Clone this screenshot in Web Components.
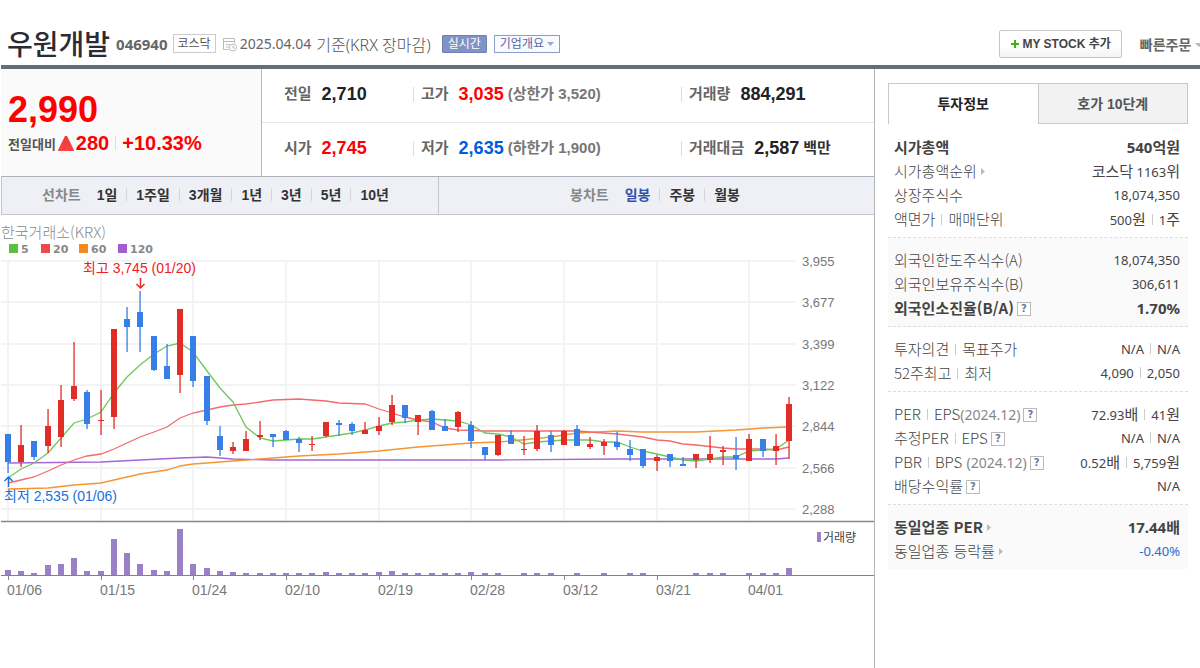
<!DOCTYPE html>
<html lang="ko">
  <head>
    <meta charset="UTF-8" />
    <title>우원개발</title>
    <style>
      body {
        margin: 0;
        background: #fff;
        color: #444;
        font-family: "Noto Sans", "Noto Sans CJK KR", sans-serif;
        font-size: 14px;
      }
    </style>
  </head>
  <body>
    <stock-page>
      <stock-header slot="header" name="우원개발" code="046940"></stock-header>
      <price-summary></price-summary>
      <chart-toolbar></chart-toolbar>
      <candle-chart></candle-chart>
      <info-panel slot="side"></info-panel>
    </stock-page>

    <template id="stock-page">
      <style>
        :host {
          display: flex;
          flex-direction: column;
          min-height: 100vh;
          overflow: hidden;
        }
        .body {
          display: flex;
          flex: 1;
          margin-left: 1px;
          border-top: 4px solid #646d79;
        }
        main {
          flex: 1;
          min-width: 0;
          border-right: 1px solid #b4b5bb;
        }
        aside {
          flex: 0 0 300px;
          padding: 14px 12px 0 13px;
        }
      </style>
      <slot name="header"></slot>
      <div class="body">
        <main><slot></slot></main>
        <aside><slot name="side"></slot></aside>
      </div>
    </template>

    <template id="stock-header">
      <style>
        :host {
          display: flex;
          align-items: center;
          height: 43px;
          padding: 22px 0 0 7px;
          white-space: nowrap;
        }
        h1 {
          margin: 0 6px 0 0;
          font-size: 28px;
          line-height: 40px;
          font-weight: 500;
          color: #2b2b33;
        }
        .code {
          margin-right: 5px;
          font-size: 15px;
          font-weight: bold;
          color: #666;
        }
        .market {
          margin-right: 6px;
          padding: 0 4px;
          border: 1px solid #ccc;
          font-size: 12px;
          line-height: 17px;
          color: #555;
        }
        .date {
          margin: 0 5px 0 2px;
          color: #666;
        }
        .base {
          font-size: 16px;
          font-weight: 300;
          color: #555;
        }
        button {
          box-sizing: border-box;
          font-family: inherit;
          font-size: 12px;
          line-height: 16px;
          cursor: pointer;
        }
        .live {
          margin: 0 7px 0 11px;
          padding: 0 5px;
          border: 1px solid #6f80b4;
          border-radius: 1px;
          background: #8193c5;
          color: #fff;
        }
        .outline {
          padding: 0 5px;
          border: 1px solid #8c9ccb;
          background: #f9faff;
          color: #5667a8;
        }
        .outline svg {
          vertical-align: 2px;
        }
        .right {
          display: flex;
          align-items: center;
          gap: 18px;
          margin-left: auto;
          font-weight: bold;
          color: #444;
        }
        .my {
          display: flex;
          align-items: center;
          gap: 3px;
          height: 28px;
          padding: 0 10px;
          border: 1px solid #c6c6c6;
          border-radius: 2px;
          background: linear-gradient(#fff 60%, #f3f3f3);
          font-family: "Liberation Sans", "Noto Sans CJK KR", sans-serif;
          font-weight: bold;
          color: #444;
        }
        a {
          font-size: 14px;
          color: #666;
          text-decoration: none;
        }
        a svg {
          margin: 0 -3px 3px 0;
        }
      </style>
      <h1></h1>
      <span class="code"></span>
      <span class="market">코스닥</span>
      <svg width="16" height="16" viewBox="0 0 16 16" fill="none" stroke="#bbb">
        <path d="M7 13.500H1.500V2.500H12.500V7M1.500 5.500H12.500M4 8.500H8M4 11H7" />
        <circle cx="11" cy="11.500" r="3.500" fill="#fff" />
        <path d="M11 9.500V12H13" />
      </svg>
      <span class="date">2025.04.04</span>
      <span class="base">기준(KRX 장마감)</span>
      <button class="live">실시간</button>
      <button class="outline">
        기업개요
        <svg width="7" height="4" viewBox="0 0 7 4"><path d="M0 0H7L3.500 4Z" fill="#9ba9d4" /></svg>
      </button>
      <div class="right">
        <button class="my">
          <svg width="10" height="10" viewBox="0 0 10 10"><path d="M4 1H6V4H9V6H6V9H4V6H1V4H4Z" fill="#3cb10f" /></svg>
          MY STOCK 추가
        </button>
        <a href="#order">빠른주문
          <svg width="8" height="4" viewBox="0 0 8 4"><path d="M0 0H8L4 4Z" fill="#bbb" /></svg>
        </a>
      </div>
    </template>

    <template id="price-summary">
      <style>
        :host {
          display: flex;
          height: 107px;
          font-family: "Liberation Sans", "Noto Sans CJK KR", sans-serif;
          font-weight: bold;
          white-space: nowrap;
        }
        .today {
          box-sizing: border-box;
          flex: 0 0 30%;
          max-width: 261px;
          padding: 20px 0 0 7px;
          border-right: 1px solid #b8b8bc;
          background: #fafafa;
          color: #f00;
        }
        .price {
          font-size: 36px;
          line-height: 42px;
        }
        .diff {
          display: flex;
          align-items: center;
          height: 24px;
          font-size: 20px;
        }
        .diff span {
          font-size: 13px;
          color: #555;
        }
        .diff svg {
          margin: 0 2px;
        }
        .diff b + b {
          margin-left: 6px;
          padding-left: 7px;
          background: linear-gradient(#ddd, #ddd) left / 1px 14px no-repeat;
        }
        table {
          flex: 1;
          table-layout: fixed;
          border-collapse: collapse;
          font-size: 18px;
          line-height: 20px;
          color: #222;
        }
        tr + tr td {
          border-top: 1px solid #e6e6e8;
        }
        td {
          padding: 0 0 3px;
        }
        td:nth-child(1) {
          width: 151px;
        }
        td:nth-child(2) {
          width: 268px;
        }
        .cell {
          display: flex;
          align-items: center;
          gap: 10px;
          padding-left: 8px;
          background: linear-gradient(#ddd, #ddd) left / 1px 15px no-repeat;
        }
        td:first-child .cell {
          padding-left: 22px;
          background: none;
        }
        .cell span {
          font-size: 15px;
          color: #666;
        }
        .cell i {
          margin-left: -6px;
          font-style: normal;
          font-size: 15px;
          color: #777;
        }
        .cell .unit {
          margin-left: -6px;
          color: #333;
        }
        .up {
          color: #f00;
        }
        .down {
          color: #005dde;
        }
      </style>
      <div class="today">
        <div class="price">2,990</div>
        <div class="diff">
          <span>전일대비</span>
          <svg width="16" height="15" viewBox="0 0 16 15">
            <linearGradient id="g" x2="0" y2="1"><stop stop-color="#e63b3b" /><stop offset="1" stop-color="#f44" /></linearGradient>
            <path d="M7 0H9L16 14V15H0V14Z" fill="url(#g)" />
          </svg>
          <b>280</b><b>+10.33%</b>
        </div>
      </div>
      <table>
        <tr>
          <td><div class="cell"><span>전일</span><b>2,710</b></div></td>
          <td><div class="cell"><span>고가</span><b class="up">3,035</b><i>(상한가 3,520)</i></div></td>
          <td><div class="cell"><span>거래량</span><b>884,291</b></div></td>
        </tr>
        <tr>
          <td><div class="cell"><span>시가</span><b class="up">2,745</b></div></td>
          <td><div class="cell"><span>저가</span><b class="down">2,635</b><i>(하한가 1,900)</i></div></td>
          <td><div class="cell"><span>거래대금</span><b>2,587</b><span class="unit">백만</span></div></td>
        </tr>
      </table>
    </template>

    <template id="chart-toolbar">
      <style>
        :host {
          display: flex;
          height: 37px;
          border: 1px solid #c3c4cc;
          border-top-color: #aeb0bb;
          border-right: 0;
          background: #eff0f6;
          font-family: "Liberation Sans", "Noto Sans CJK KR", sans-serif;
          font-weight: bold;
          white-space: nowrap;
        }
        nav {
          box-sizing: border-box;
          flex: 0 0 50%;
          display: flex;
          align-items: center;
          padding: 0 0 3px 40px;
        }
        nav + nav {
          padding-left: 131px;
          border-left: 1px solid #c3c4cc;
        }
        span {
          margin-right: 7px;
          color: #888;
        }
        a {
          padding: 0 9px;
          color: #333;
          text-decoration: none;
        }
        a + a {
          padding-left: 10px;
          background: linear-gradient(#d5d6dc, #d5d6dc) left / 1px 13px no-repeat;
        }
        .on {
          color: #3450a8;
        }
      </style>
      <nav>
        <span>선차트</span><a href="#d1">1일</a><a href="#w1">1주일</a><a href="#m3">3개월</a><a href="#y1">1년</a><a href="#y3">3년</a><a href="#y5">5년</a><a href="#y10">10년</a>
      </nav>
      <nav>
        <span>봉차트</span><a href="#day" class="on">일봉</a><a href="#week">주봉</a><a href="#month">월봉</a>
      </nav>
    </template>

    <template id="info-panel">
      <style>
        :host {
          display: block;
        }
        .tabs {
          display: flex;
        }
        button {
          flex: 1;
          height: 41px;
          padding: 0 0 2px;
          border: 1px solid #c8c8c8;
          background: #f2f2f2;
          font: bold 14px "Liberation Sans", "Noto Sans CJK KR", sans-serif;
          color: #555;
        }
        button[aria-selected="true"] {
          border-width: 1px 0 0 1px;
          background: #fff;
          color: #222;
        }
      </style>
      <div class="tabs" role="tablist">
        <button role="tab" aria-selected="true">투자정보</button>
        <button role="tab" aria-selected="false">호가 10단계</button>
      </div>
      <div class="groups"></div>
    </template>

    <template id="info-group">
      <style>
        :host {
          display: block;
          padding: 10px 8px 6px 6px;
          border-bottom: 1px dashed #ddd;
        }
        :host([shaded]) {
          background: #fafafa;
        }
        :host(:first-child) {
          padding-top: 11px;
        }
        :host(:last-child) {
          border-bottom: 0;
        }
        table {
          width: 100%;
          border-collapse: collapse;
          white-space: nowrap;
        }
        th,
        td {
          height: 24px;
          padding: 0;
          font-weight: normal;
          line-height: 20px;
        }
        th {
          text-align: left;
          font-size: 15px;
          font-weight: 300;
          font-family: "Noto Sans CJK KR", sans-serif;
        }
        td {
          text-align: right;
          font-size: 13px;
        }
        .strong th,
        .strong td {
          font-weight: bold;
        }
        .strong th,
        .strong td,
        .strong u {
          font-size: 15px;
        }
        u {
          font-size: 15px;
          text-decoration: none;
        }
        i {
          display: inline-block;
          width: 1px;
          height: 11px;
          margin: 0 6px;
          background: #ccc;
        }
        em {
          font: 14px "Noto Sans", sans-serif;
          color: #888;
        }
        th button {
          box-sizing: border-box;
          width: 14px;
          height: 14px;
          margin-left: 3px;
          padding: 0;
          border: 1px solid #bbb;
          background: #fff;
          font: bold 10px/12px "DejaVu Sans", sans-serif;
          color: #6a7a95;
          vertical-align: 2px;
        }
        svg {
          margin-left: 4px;
          vertical-align: 2px;
        }
        .minus {
          color: #2a6ad0;
        }
      </style>
      <table></table>
    </template>

    <script>
      class BaseElement extends HTMLElement {
        constructor() {
          super();
          this.attachShadow({ mode: "open" });
          const tpl = document.getElementById(this.localName);
          if (tpl) this.shadowRoot.append(tpl.content.cloneNode(true));
        }
      }

      class StockHeader extends BaseElement {
        connectedCallback() {
          this.shadowRoot.querySelector("h1").textContent = this.getAttribute("name");
          this.shadowRoot.querySelector(".code").textContent = this.getAttribute("code");
        }
      }

      const help = `<button aria-label="도움말">?</button>`;
      const arrow = `<svg width="4" height="7" viewBox="0 0 4 7"><path d="M0 0L4 3.500L0 7Z" fill="#bbb"/></svg>`;
      const bar = "<i></i>";

      // [label, value, row class]
      const groups = [
        [
          ["시가총액", "540<u>억원</u>", "strong"],
          ["시가총액순위" + arrow, "<u>코스닥</u> 1163<u>위</u>"],
          ["상장주식수", "18,074,350"],
          ["액면가" + bar + "매매단위", "500<u>원</u>" + bar + "1<u>주</u>"],
        ],
        [
          ["외국인한도주식수(A)", "18,074,350"],
          ["외국인보유주식수(B)", "306,611"],
          ["외국인소진율(B/A)" + help, "1.70%", "strong"],
        ],
        [
          ["투자의견" + bar + "목표주가", "N/A" + bar + "N/A"],
          ["52주최고" + bar + "최저", "4,090" + bar + "2,050"],
        ],
        [
          ["PER" + bar + "EPS<em>(2024.12)</em>" + help, "72.93<u>배</u>" + bar + "41<u>원</u>"],
          ["추정PER" + bar + "EPS" + help, "N/A" + bar + "N/A"],
          ["PBR" + bar + "BPS <em>(2024.12)</em>" + help, "0.52<u>배</u>" + bar + "5,759<u>원</u>"],
          ["배당수익률" + help, "N/A"],
        ],
        [
          ["동일업종 PER" + arrow, "17.44<u>배</u>", "strong"],
          ["동일업종 등락률" + arrow, "<span class='minus'>-0.40%</span>"],
        ],
      ];

      class InfoGroup extends BaseElement {
        set rows(rows) {
          this.shadowRoot.querySelector("table").innerHTML = rows
            .map(([label, value, cls]) => `<tr class="${cls || ""}"><th scope="row">${label}</th><td>${value}</td></tr>`)
            .join("");
        }
      }

      class InfoPanel extends BaseElement {
        connectedCallback() {
          const box = this.shadowRoot.querySelector(".groups");
          groups.forEach((rows, i) => {
            const group = document.createElement("info-group");
            group.rows = rows;
            group.toggleAttribute("shaded", i === 1 || i === 4);
            box.append(group);
          });
        }
      }

      // direction, body top, body bottom, wick top, wick bottom
      const candles = `
        d 434 462 434 473,u 445 462 425 467,d 441 457 441 460,u 426 446 409 453,u 400 437 385 447,
        u 386 399 342 401,d 392 424 390 429,u 420 421 390 435,u 329 417 329 429,d 319 327 307 352,
        d 312 327 291 352,d 336 370 336 371,d 366 379 344 379,u 309 375 309 393,d 336 381 336 387,
        d 376 421 376 425,d 436 450 426 456,u 447 451 442 454,u 439 451 431 451,u 435 437 421 440,
        d 434 437 434 447,d 431 440 430 440,d 439 443 437 452,u 444 445 436 451,u 422 436 422 437,
        d 423 425 420 436,d 424 431 422 435,u 430 434 422 434,u 426 431 417 435,u 405 422 395 425,
        d 405 418 405 423,u 415 422 415 435,d 411 430 410 430,d 426 431 419 431,u 412 427 411 432,
        d 425 441 421 448,d 447 455 447 460,u 435 455 435 456,d 435 444 430 444,u 449 450 436 455,
        u 431 449 425 451,d 435 445 431 452,u 431 445 430 445,d 429 446 425 446,u 444 447 437 449,
        u 442 446 439 455,d 442 447 432 450,d 449 455 440 461,d 449 466 449 468,u 457 461 455 471,
        d 454 461 454 467,d 464 466 457 466,u 454 460 454 468,u 454 460 436 463,u 450 452 446 465,
        d 455 459 437 470,u 439 461 434 461,d 439 451 439 457,u 446 451 434 465,u 404 441 397 459`
        .split(",")
        .map((c) => c.trim().split(" "));
      const volumes = [
        5, 4, 2, 10, 11, 17, 4, 4, 36, 22, 11, 5, 4, 46, 11, 7, 4, 3, 2, 2,
        2, 2, 2, 2, 3, 2, 2, 2, 3, 4, 2, 2, 2, 2, 2, 3, 2, 2, 0, 2,
        2, 2, 0, 2, 0, 2, 0, 2, 2, 0, 0, 0, 2, 2, 2, 0, 2, 2, 2, 7,
      ];
      // moving averages as day:y
      const averages = {
        "#a566d6": "0:463 7:462 10:460 13:458 15:457 17:459 20:460 37:460 46:459 58:459 59:458",
        "#f79433": "0:489 3:488 5:485 7:483 9:477 10:474 12:470 13:466 14:464 15:463 17:461 19:459 22:456 25:454 28:451 31:447 35:443 37:442 38:441 41:437 43:433 46:431 48:432 52:432 55:430 57:428 59:427",
        "#f46a6d": "0:483 1:480 2:477 3:471 4:465 5:460 6:456 7:454 8:449 9:443 10:437 11:432 12:427 13:418 14:413 15:410 16:407 17:405 18:404 19:402 20:400 22:399 23:400 24:401 25:403 27:404 28:409 29:413 30:417 31:420 32:422 33:428 34:430 36:431 43:431 45:433 46:434 48:437 49:440 50:441 51:444 52:445 54:448 55:449 57:449 58:450 59:447",
        "#6cc95a": "0:478 1:469 2:463 3:453 4:438 5:423 6:419 7:412 8:393 9:377 10:365 11:354 12:346 13:343 14:352 15:371 16:388 17:402 18:427 19:438 20:441 21:440 22:439 23:439 24:437 25:435 26:433 27:430 28:426 29:423 30:422 31:420 32:419 33:420 34:421 35:425 36:433 37:434 38:437 39:444 40:442 41:441 42:440 44:440 45:442 46:442 47:447 48:451 49:454 50:457 51:460 52:461 53:459 54:457 55:457 56:451 57:450 58:449 59:440",
      };
      const prices = ["3,955", "3,677", "3,399", "3,122", "2,844", "2,566", "2,288"];
      const dates = ["01/06", "01/15", "01/24", "02/10", "02/19", "02/28", "03/12", "03/21", "04/01"];
      const colors = { u: "#e12d26", d: "#377ee6" };

      class CandleChart extends BaseElement {
        connectedCallback() {
          const x = (i) => Math.round(7 + (i * 781) / 59);
          let s = "";
          prices.forEach((p, i) => {
            const y = 261 + Math.round(i * 41.3);
            s += `<path d="M0 ${y}H795" stroke="#f3f3f3" stroke-width="2"/><text x="801" y="${y + 5}">${p}</text>`;
          });
          dates.forEach((d, i) => {
            const cx = x(i * 7);
            s += `<path d="M${cx} 261V521" stroke="#f3f3f3" stroke-width="2"/><path d="M${cx}.5 576V580" stroke="#888"/>`;
            s += `<text x="${cx - 1}" y="595" class="date">${d}</text>`;
          });
          for (const [color, list] of Object.entries(averages)) {
            const pts = list.split(" ").map((p) => {
              const [i, y] = p.split(":");
              return `${x(+i)},${y}`;
            });
            s += `<polyline points="${pts.join(" ")}" fill="none" stroke="${color}" stroke-width="1.3"/>`;
          }
          candles.forEach(([dir, top, bottom, high, low], i) => {
            const cx = x(i);
            s += `<path d="M${cx - 3} ${top}h6V${bottom}h-6zM${cx - 0.6} ${high}h1.300V${low}h-1.300z" fill="${colors[dir]}" stroke="none"/>`;
          });
          volumes.forEach((v, i) => {
            if (v) s += `<rect x="${x(i) - 3}" y="${575 - v}" width="6" height="${v}" fill="#9a80c4"/>`;
          });
          const legend = [["5", 8, "#5bbf42"], ["20", 40, "#ee4a4c"], ["60", 78, "#f78a1c"], ["120", 117, "#a05fd0"]]
            .map(([t, lx, c]) => `<rect x="${lx}" y="244" width="9" height="9" fill="${c}"/><text x="${lx + 12}" y="253" class="legend">${t}</text>`)
            .join("");
          this.shadowRoot.innerHTML = `
            <style>
              :host { display: block; }
              svg { display: block; width: 100%; height: auto; }
              text { font: 13px "Liberation Sans", "Noto Sans CJK KR", sans-serif; fill: #777; }
              .date { font-size: 14px; }
              .legend { font: bold 11px "DejaVu Sans", sans-serif; fill: #888; }
              .market { font: 300 15px "Noto Sans CJK KR", sans-serif; fill: #888; }
              .note { font-size: 14px; }
            </style>
            <svg viewBox="0 215 873 395" role="img" aria-label="일봉 차트">
              ${s}
              <text x="0" y="238" class="market">한국거래소(KRX)</text>
              ${legend}
              <text x="82" y="273" class="note" style="fill:#f01c24">최고 3,745 (01/20)</text>
              <path d="M139.500 278V287M135.500 284L139.500 288L143.500 284" fill="none" stroke="#e12d26" stroke-width="1.500"/>
              <text x="3" y="501" class="note" style="fill:#2170d8">최저 2,535 (01/06)</text>
              <path d="M7.500 487V478M3.500 481L7.500 477L11.500 481" fill="none" stroke="#2170d8" stroke-width="1.500"/>
              <path d="M0 521.500H873" stroke="#83888e" stroke-width="1.500"/>
              <path d="M0 575.500H873" stroke="#83808c"/>
              <rect x="816" y="532" width="4" height="10" fill="#9a80c4"/>
              <text x="822" y="542" style="fill:#444;font-size:12px">거래량</text>
            </svg>`;
        }
      }

      customElements.define("stock-page", class extends BaseElement {});
      customElements.define("stock-header", StockHeader);
      customElements.define("price-summary", class extends BaseElement {});
      customElements.define("chart-toolbar", class extends BaseElement {});
      customElements.define("candle-chart", CandleChart);
      customElements.define("info-group", InfoGroup);
      customElements.define("info-panel", InfoPanel);
    </script>
  </body>
</html>
